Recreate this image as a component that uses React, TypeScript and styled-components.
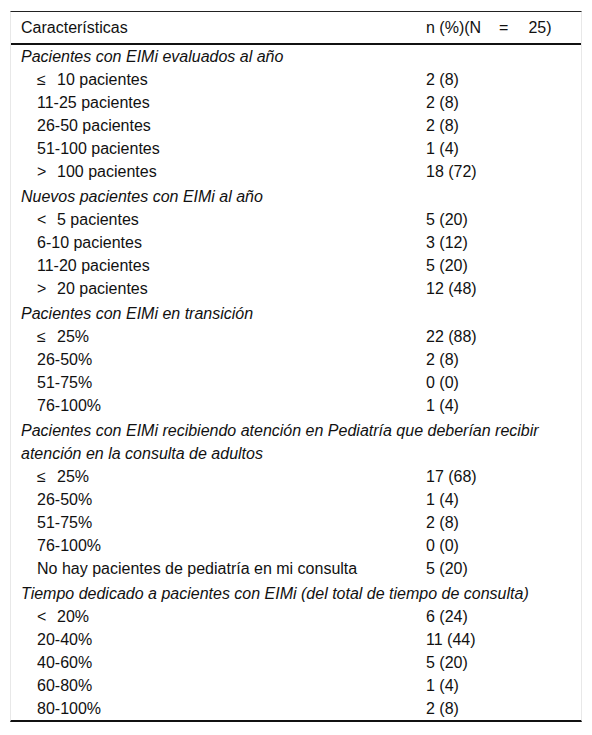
import React from "react";
import styled, { createGlobalStyle } from "styled-components";

const Global = createGlobalStyle`
  html, body { margin: 0; padding: 0; background: #fff; }
  body { font-family: "Liberation Sans", Arial, sans-serif; color: #111; }
`;

const Page = styled.div`
  padding: 11px 10px 0 10px;
  width: 572px;
`;

const Table = styled.div`
  border-top: 1px solid #222;
  border-bottom: 2px solid #111;
  border-left: 1px solid #e8e8e8;
  border-right: 1px solid #e8e8e8;
  display: flex;
  flex-direction: column;
`;

const HeaderRow = styled.div`
  display: grid;
  grid-template-columns: 405px 1fr;
  padding: 0 0 0 10px;
  height: 31px;
  align-items: center;
  border-bottom: 2px solid #111;
  font-size: 16px;
`;

const Row = styled.div<{ $indent?: boolean }>`
  display: grid;
  grid-template-columns: ${(p) => (p.$indent ? "389px" : "405px")} 1fr;
  padding-left: ${(p) => (p.$indent ? "26px" : "10px")};
  line-height: 23px;
  font-size: 16px;
`;

const Section = styled.div<{ $first?: boolean }>`
  padding: ${(p) => (p.$first ? "0" : "2px")} 20px 0 10px;
  line-height: 23px;
  font-size: 16px;
  font-style: italic;
`;

const Op = styled.span`
  display: inline-block;
  width: 20px;
`;

const Eq = styled.span`
  display: inline-block;
  padding: 0 20px 0 18px;
`;

type Item = [string, string];
type Group = { title: string; items: Item[] };

const groups: Group[] = [
  {
    title: "Pacientes con EIMi evaluados al año",
    items: [
      ["≤|10 pacientes", "2 (8)"],
      ["11-25 pacientes", "2 (8)"],
      ["26-50 pacientes", "2 (8)"],
      ["51-100 pacientes", "1 (4)"],
      [">|100 pacientes", "18 (72)"],
    ],
  },
  {
    title: "Nuevos pacientes con EIMi al año",
    items: [
      ["<|5 pacientes", "5 (20)"],
      ["6-10 pacientes", "3 (12)"],
      ["11-20 pacientes", "5 (20)"],
      [">|20 pacientes", "12 (48)"],
    ],
  },
  {
    title: "Pacientes con EIMi en transición",
    items: [
      ["≤|25%", "22 (88)"],
      ["26-50%", "2 (8)"],
      ["51-75%", "0 (0)"],
      ["76-100%", "1 (4)"],
    ],
  },
  {
    title:
      "Pacientes con EIMi recibiendo atención en Pediatría que deberían recibir atención en la consulta de adultos",
    items: [
      ["≤|25%", "17 (68)"],
      ["26-50%", "1 (4)"],
      ["51-75%", "2 (8)"],
      ["76-100%", "0 (0)"],
      ["No hay pacientes de pediatría en mi consulta", "5 (20)"],
    ],
  },
  {
    title: "Tiempo dedicado a pacientes con EIMi (del total de tiempo de consulta)",
    items: [
      ["<|20%", "6 (24)"],
      ["20-40%", "11 (44)"],
      ["40-60%", "5 (20)"],
      ["60-80%", "1 (4)"],
      ["80-100%", "2 (8)"],
    ],
  },
];

function Label({ text }: { text: string }) {
  const parts = text.split("|");
  if (parts.length === 2) {
    return (
      <span>
        <Op>{parts[0]}</Op>
        {parts[1]}
      </span>
    );
  }
  return <span>{text}</span>;
}

export default function App() {
  return (
    <Page>
      <Global />
      <Table>
        <HeaderRow>
          <span>Características</span>
          <span>
            n (%)(N<Eq>=</Eq>25)
          </span>
        </HeaderRow>
        {groups.map((g, gi) => (
          <React.Fragment key={gi}>
            <Section $first={gi === 0}>{g.title}</Section>
            {g.items.map(([a, b], i) => (
              <Row $indent key={i}>
                <Label text={a} />
                <span>{b}</span>
              </Row>
            ))}
          </React.Fragment>
        ))}
      </Table>
    </Page>
  );
}
